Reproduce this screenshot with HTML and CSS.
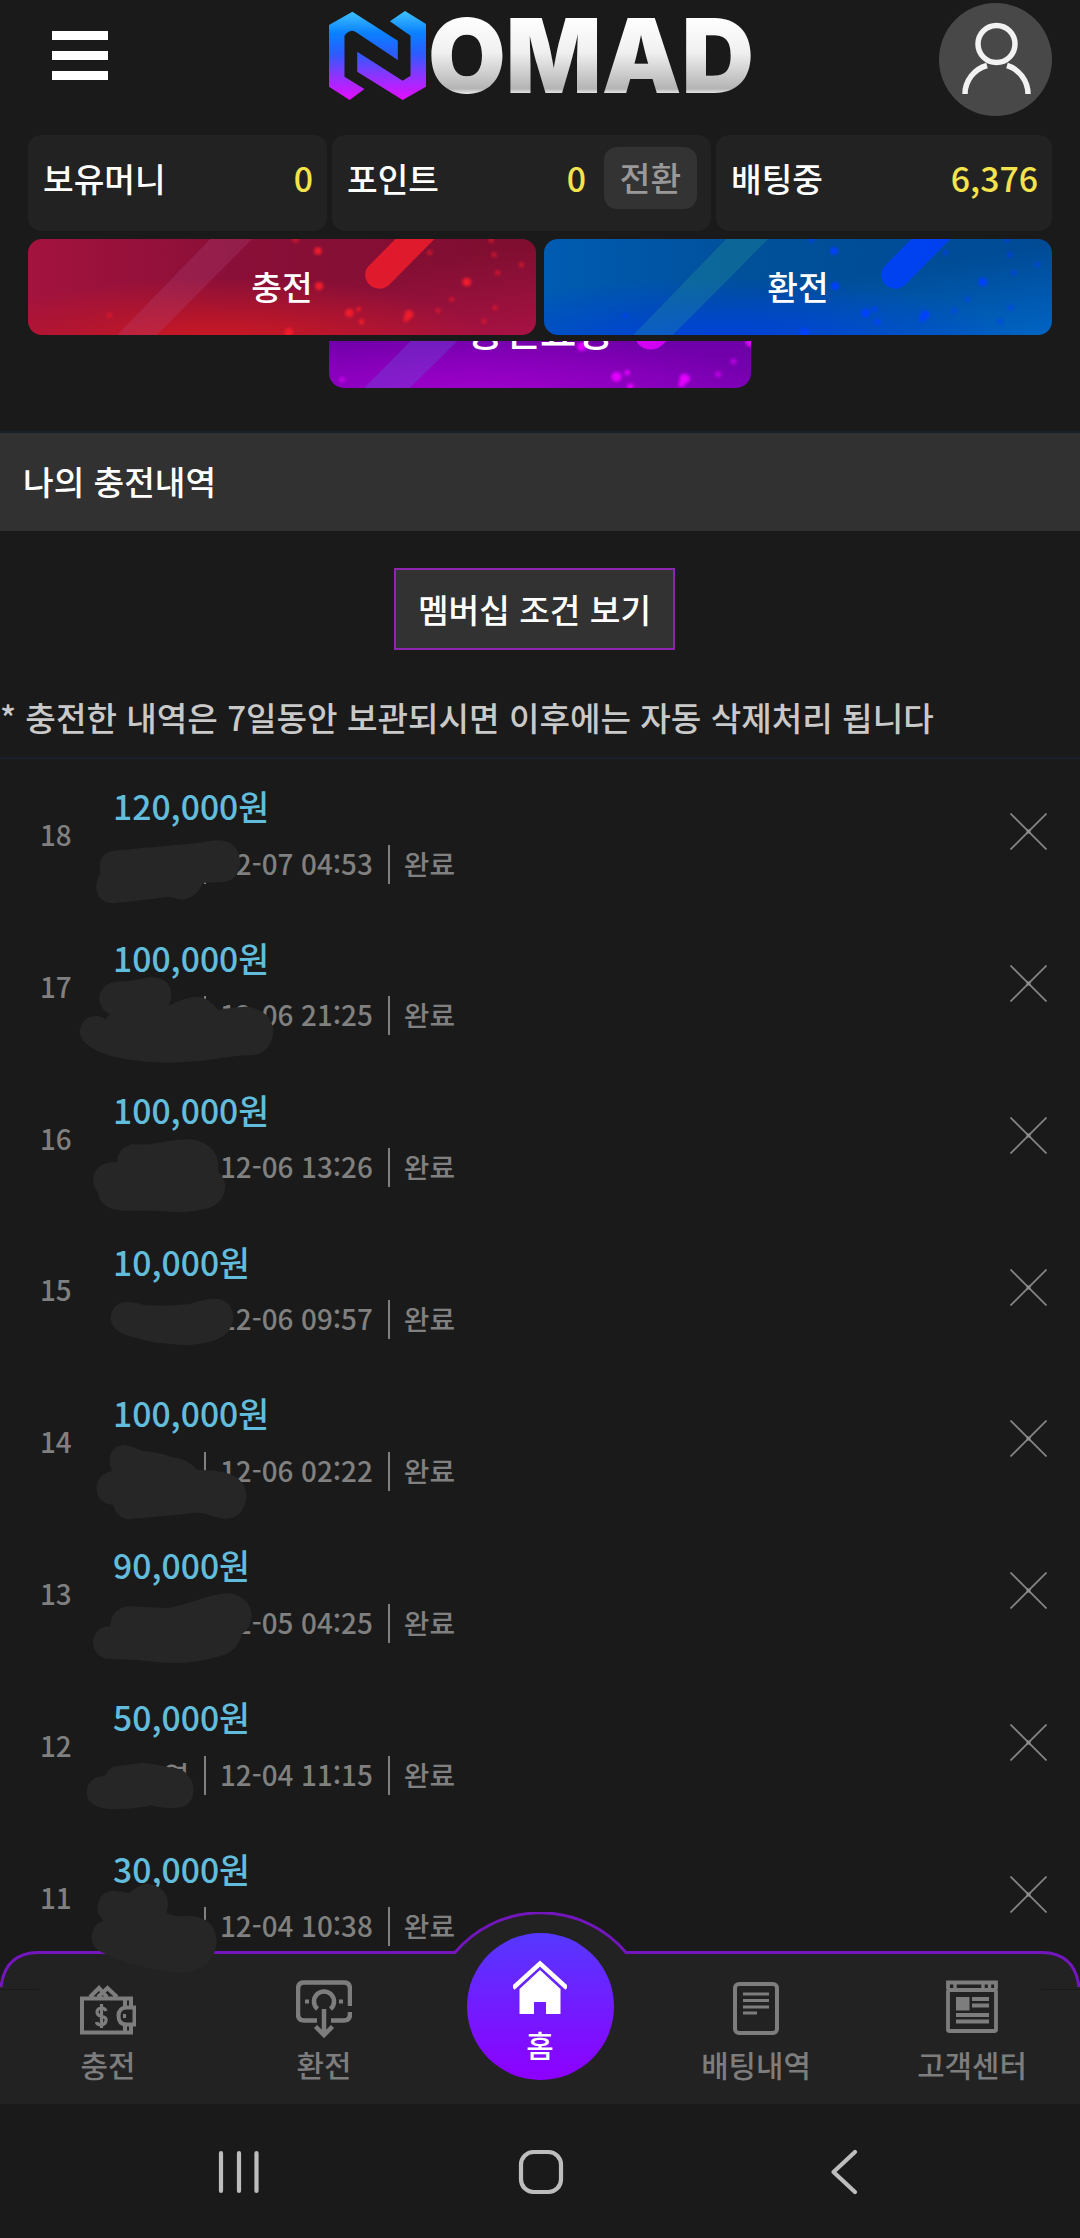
FILE: index.html
```html
<!DOCTYPE html>
<html lang="ko">
<head>
<meta charset="utf-8">
<meta name="viewport" content="width=device-width">
<title>NOMAD</title>
<link rel="stylesheet" href="styles.css">
</head>
<body>
<svg class="defs" width="0" height="0" aria-hidden="true">
  <defs>
    <linearGradient id="mark" gradientUnits="userSpaceOnUse" x1="0" y1="31" x2="0" y2="298"><stop offset="0" stop-color="#3fc4ff"/><stop offset=".25" stop-color="#0a80ff"/><stop offset=".48" stop-color="#2b5cff"/><stop offset=".72" stop-color="#8a35ff"/><stop offset="1" stop-color="#e60cff"/></linearGradient>
    <linearGradient id="silver" gradientUnits="userSpaceOnUse" x1="0" y1="7" x2="0" y2="83"><stop offset="0" stop-color="#fff"/><stop offset=".45" stop-color="#f0f0f0"/><stop offset=".93" stop-color="#b4b4b4"/><stop offset="1" stop-color="#eee"/></linearGradient>
    <g id="sparks">
      <path d="M610 57H732L455 345H340Z" class="streak"/>
      <path d="M1101 165 1240 20" fill="none" stroke="currentColor" stroke-width="82" stroke-linecap="round" opacity=".85"/>
      <g class="dots" fill="currentColor">
        <circle cx="923" cy="93" r="11"/><circle cx="926" cy="198" r="12"/><circle cx="1014" cy="279" r="13"/><circle cx="1041" cy="268" r="7"/><circle cx="1049" cy="305" r="8"/><circle cx="1187" cy="284" r="13"/><circle cx="1179" cy="298" r="8"/><circle cx="1355" cy="186" r="13"/><circle cx="838" cy="337" r="13"/>
        <g opacity=".6"><circle cx="858" cy="58" r="10"/><circle cx="1247" cy="98" r="8"/><circle cx="1434" cy="104" r="8"/><circle cx="1514" cy="134" r="8"/><circle cx="1445" cy="158" r="8"/><circle cx="1311" cy="238" r="8"/><circle cx="1272" cy="272" r="8"/><circle cx="1437" cy="263" r="8"/><circle cx="1405" cy="304" r="8"/><circle cx="318" cy="286" r="8"/><circle cx="1426" cy="60" r="8"/></g>
      </g>
    </g>
    <symbol id="x" viewBox="0 0 37 37"><path d="M.5.5 36.5 36.5M36.5.5.5 36.5" stroke="#858585" stroke-width="1.7"/><rect x="16.5" y="16.5" width="4" height="4" fill="#8d8d8d"/></symbol>
  </defs>
</svg>
<div class="app">
  <header class="header">
    <div class="topbar">
      <div class="menu"><i></i><i></i><i></i></div>
      <div class="logo">
        <svg width="97" height="89" viewBox="955 31 282 267" preserveAspectRatio="none" fill="url(#mark)">
          <path d="M955 73 1023 33 1155 120V178L1036 96Q1020 84 1006 98L1000 105V228L1058 265 1015 298 955 258Z"/>
          <path d="M1132 62 1176 31 1237 70V258L1169 298 1037 213V153L1169 240 1192 225V105Z"/>
        </svg>
        <svg class="word" width="326" height="96" viewBox="0 0 326 96"><text x="-1" y="82" textLength="326" lengthAdjust="spacingAndGlyphs">OMAD</text></svg>
      </div>
      <div class="avatar">
        <svg width="113" height="113" viewBox="0 0 113 113" fill="none" stroke="#f2f2f2" stroke-width="5.500"><circle cx="57.500" cy="41" r="18.500"/><path d="M26 91C26 78 35 66 48 62.500M89 91C89 78 80 66 68 62.500"/></svg>
      </div>
    </div>
    <div class="balances">
      <div class="card c1"><span>보유머니</span><b>0</b></div>
      <div class="card c2"><span>포인트</span><b>0</b><em>전환</em></div>
      <div class="card c3"><span>배팅중</span><b>6,376</b></div>
    </div>
    <div class="actions">
      <div class="btn red"><svg viewBox="81 57 1475 288" preserveAspectRatio="none"><use href="#sparks"/></svg><span>충전</span></div>
      <div class="btn blue"><svg viewBox="81 57 1475 288" preserveAspectRatio="none"><use href="#sparks"/></svg><span>환전</span></div>
    </div>
  </header>
  <main class="content">
    <div class="request"><div class="btn purple"><svg viewBox="955 155 1226 348" preserveAspectRatio="none"><use href="#sparks" transform="translate(629 157) scale(1.145 1.12)"/></svg><span>충전요청</span></div></div>
    <h2 class="title">나의 충전내역</h2>
    <div class="member"><div class="member-btn">멤버십 조건 보기</div></div>
    <p class="note">* 충전한 내역은 7일동안 보관되시면 이후에는 자동 삭제처리 됩니다</p>
    <div class="list">
      <div class="row"><span class="no">18</span><div class="info"><div class="amount">120,000원</div><div class="meta"><span class="name"></span><span>12-07 04:53</span><span>완료</span></div></div><svg class="del"><use href="#x"/></svg></div>
      <div class="row"><span class="no">17</span><div class="info"><div class="amount">100,000원</div><div class="meta"><span class="name"></span><span>12-06 21:25</span><span>완료</span></div></div><svg class="del"><use href="#x"/></svg></div>
      <div class="row"><span class="no">16</span><div class="info"><div class="amount">100,000원</div><div class="meta"><span class="name"></span><span>12-06 13:26</span><span>완료</span></div></div><svg class="del"><use href="#x"/></svg></div>
      <div class="row"><span class="no">15</span><div class="info"><div class="amount">10,000원</div><div class="meta"><span class="name"></span><span>12-06 09:57</span><span>완료</span></div></div><svg class="del"><use href="#x"/></svg></div>
      <div class="row"><span class="no">14</span><div class="info"><div class="amount">100,000원</div><div class="meta"><span class="name"></span><span>12-06 02:22</span><span>완료</span></div></div><svg class="del"><use href="#x"/></svg></div>
      <div class="row"><span class="no">13</span><div class="info"><div class="amount">90,000원</div><div class="meta"><span class="name"></span><span>12-05 04:25</span><span>완료</span></div></div><svg class="del"><use href="#x"/></svg></div>
      <div class="row"><span class="no">12</span><div class="info"><div class="amount">50,000원</div><div class="meta"><span class="name">영</span><span>12-04 11:15</span><span>완료</span></div></div><svg class="del"><use href="#x"/></svg></div>
      <div class="row"><span class="no">11</span><div class="info"><div class="amount">30,000원</div><div class="meta"><span class="name"></span><span>12-04 10:38</span><span>완료</span></div></div><svg class="del"><use href="#x"/></svg></div>
    </div>
  </main>
  <nav class="tabs">
    <svg class="tabs-bg" width="1080" height="192" viewBox="0 0 1080 192">
      <path d="M0 192V75Q4 41 38 40.500H455A112 112 0 0 1 626 40.500H1042Q1076 41 1080 75V192Z" fill="#222"/>
      <path d="M1 75Q5 41 38 40.500H455A112 112 0 0 1 626 40.500H1042Q1075 41 1079 75" fill="none" stroke="#7416bd" stroke-width="3"/>
      <path d="M0 77.500H39M1041 77.500H1080" stroke="#191919"/>
    </svg>
    <div class="tab">
      <svg width="56" height="58" viewBox="0 0 56 58" fill="none" stroke="#7d7d7d" stroke-width="4"><path d="M10 17 19 8 27 17M18 17 27.500 8 37 17M51 27V18.500H2V52.500H51V45M45 19V27M45 45V52"/><path d="M56 27.500H46Q38.500 28 38.500 36T46 44.500H56"/><path d="M54.500 27V45M43 36H46"/><path d="M26 31Q25 28 21.500 28 17 28.500 17 32T22 36.500 26 41 21.500 45Q17 45 16.500 42M21.500 24V48" stroke-width="3.200"/></svg>
      <span>충전</span>
    </div>
    <div class="tab">
      <svg width="56" height="58" viewBox="0 0 56 58" fill="none" stroke="#7d7d7d" stroke-width="4.500"><path d="M54 26V9Q54 2.500 48 2.500H8Q2 2.500 2 9V34Q2 40.500 8 40.500H21M35 40.500H48Q54 40.500 54 34V32"/><path d="M21.500 29Q18 26 18 21.500A10 10 0 0 1 38 21.500Q38 26 34.500 29M28 29V56M19.500 46.500 28 55 36.500 46.500"/><path d="M9 21.500H13M43 21.500H47" stroke-width="4"/></svg>
      <span>환전</span>
    </div>
    <div class="tab home"><div class="orb">
      <svg width="54" height="56" viewBox="0 0 54 56"><path d="M0 28 27 3.500 54 28" fill="none" stroke="#fff" stroke-width="4.500"/><path d="M27 10 47.500 29V54H33V42H21V54H6.500V29Z" fill="#fff"/></svg>
      <span>홈</span></div>
    </div>
    <div class="tab">
      <svg width="46" height="58" viewBox="0 0 46 58" fill="none" stroke="#7d7d7d" stroke-width="4"><rect x="2" y="4" width="42" height="49" rx="4"/><path d="M10 14H36M10 20.500H36M10 27H36M10 33H24" stroke-width="3.200"/></svg>
      <span>배팅내역</span>
    </div>
    <div class="tab">
      <svg width="52" height="58" viewBox="0 0 52 58" fill="none" stroke="#7d7d7d" stroke-width="3.800"><path d="M2 9V2.500H50V9"/><rect x="2" y="10" width="48" height="41" rx="1.500"/><path d="M9 3V9M37 3V9M43.500 3V9" stroke-width="3.400"/><path d="M10 17H23.500V30.500H10Z" fill="#7d7d7d" stroke="none"/><path d="M26 19H43M26 25.500H43M10 35H43M10 41.500H43" stroke-width="3.800"/></svg>
      <span>고객센터</span>
    </div>
  </nav>
  <footer class="system">
    <svg width="1080" height="135" viewBox="0 2103 1080 135" fill="none" stroke="#bdbdbd" stroke-width="4.200" stroke-linecap="round" stroke-linejoin="round"><path d="M221 2153V2191M239 2153V2191M256.500 2153V2191"/><rect x="521" y="2152" width="40" height="40" rx="12.500"/><path d="M855 2152 833.500 2172 855 2192"/></svg>
  </footer>
  <!-- strokes that hide the depositor names -->
  <svg class="mask" width="1080" height="2238" viewBox="0 0 1080 2238" fill="#262626">
    <g transform="translate(0 540) scale(.34435 .33333)">
      <path d="M330 932C400 925 480 918 580 908Q640 893 668 908 700 930 697 975 690 1025 640 1027L590 1028Q570 1075 525 1079 500 1073 490 1070 400 1082 325 1090 282 1085 279 1040 280 1015 292 1002 280 940 330 932Z"/>
    </g>
    <g transform="translate(0 920) scale(.34435 .33333)">
      <path d="M288 236Q292 192 335 185 385 185 430 172 495 168 498 225 498 240 490 258 530 232 575 230 605 232 635 270 670 262 715 260 785 268 794 330 790 400 730 406 700 405 640 415 560 428 480 428 360 425 300 400 235 375 231 335 240 285 285 288 300 292 306 298L320 282Q290 270 288 236Z"/>
      <path d="M385 672Q420 677 460 668 520 657 550 658 620 665 633 725V755Q655 775 654 805 645 860 590 868 550 880 500 875 420 870 365 872 290 870 285 818 265 795 272 765 285 725 340 726 340 685 385 672Z"/>
      <path d="M365 1145Q395 1146 420 1155 480 1160 550 1152 600 1135 630 1136 675 1142 678 1195 672 1245 620 1262 550 1282 500 1272 440 1270 400 1255 325 1240 321 1195 325 1150 365 1145Z"/>
    </g>
    <g transform="translate(0 1380) scale(.34435 .33333)">
      <path d="M318 240Q320 198 362 194 390 200 415 213 460 215 500 232 545 235 572 270 715 265 716 350 708 415 655 416 620 412 600 402 575 395 540 402L370 418Q340 412 328 375 282 370 280 325 283 282 325 273 318 255 318 240Z"/>
      <path d="M375 678Q430 682 490 684 530 675 580 658 630 640 665 640 728 650 731 710 728 745 703 762 690 815 640 828 580 848 510 850 450 847 400 840L310 836Q272 828 270 785 275 740 320 738 322 685 375 678Z"/>
      <path d="M335 1158Q370 1155 410 1148 450 1150 490 1162 535 1165 543 1185 563 1200 562 1235 558 1280 510 1284 465 1285 440 1276 390 1288 330 1288 255 1285 251 1238 255 1190 305 1187 315 1165 335 1158Z"/>
    </g>
    <g transform="translate(0 1820) scale(.34435 .33333)">
      <path d="M283 265Q285 215 330 212 355 214 375 220 405 190 430 191 487 200 488 255L484 278Q500 288 525 289 630 280 629 370 620 458 510 459 440 450 400 436 350 425 300 398 268 390 265 352 270 310 300 303 283 285 283 265Z"/>
    </g>
  </svg>
</div>
</body>
</html>
```
FILE: styles.css
```css
* { box-sizing: border-box; margin: 0; padding: 0; }
body { background: #1a1a1a; color: #fff; font-family: "Noto Sans CJK KR", "Noto Sans", sans-serif; font-size: 33.3px; font-weight: 500; line-height: 48px; }
b, em, h2 { font-weight: 500; font-style: normal; font-size: inherit; }
svg { display: block; }
.defs { position: absolute; }
.app { position: relative; width: 1080px; height: 2238px; overflow: hidden; display: flex; flex-direction: column; }

.header { height: 341px; flex: none; padding: 3px 28px 0; }
.topbar { display: flex; justify-content: space-between; align-items: flex-start; height: 132px; }
.menu { width: 80px; padding: 28px 0 0 24px; display: grid; gap: 11px; }
.menu i { height: 9px; width: 56px; background: #fff; }
.logo { display: flex; padding: 8px 0 0 37px; gap: 3px; }
.word { overflow: visible; }
.word text { font-family: Inter, sans-serif; font-weight: 900; font-size: 103px; fill: url(#silver); }
.avatar { width: 113px; height: 113px; border-radius: 50%; background: #484848; }
.balances { display: flex; gap: 5px; height: 96px; }
.card { display: flex; align-items: center; background: #222; border-radius: 13px; padding: 0 14px 11px 15px; white-space: nowrap; }
.card b { margin-left: auto; color: #f4e34c; font-size: 33.8px; }
.c1 { width: 299px; }
.c2 { width: 379px; }
.c3 { width: 336px; }
.c2 em { width: 93px; height: 62px; margin-left: 18px; border-radius: 13px; background: #333; color: #999; text-align: center; line-height: 60px; }
.actions { display: flex; gap: 8px; margin-top: 8px; }
.btn { position: relative; overflow: hidden; display: flex; align-items: center; justify-content: center; border-radius: 14px; }
.btn svg { position: absolute; inset: 0; width: 100%; height: 100%; }
.btn span { position: relative; color: #fff; }
.actions .btn { width: 508px; height: 96px; padding-bottom: 2px; }
.streak { fill: var(--streak); }
.dots { filter: blur(4px); }
.red { --streak: rgba(190, 90, 150, .2); color: #f01c2c; background: radial-gradient(ellipse 55% 75% at 38% 115%, #d21a1e, rgba(200, 24, 36, 0)), linear-gradient(170deg, rgba(130, 14, 50, 0) 50%, #a81244), linear-gradient(90deg, #a3133e, #8a0f38 40%, #7e0e30); }
.blue { --streak: rgba(60, 190, 140, .2); color: #0040ff; background: radial-gradient(ellipse 60% 75% at 35% 115%, #003ce0, rgba(0, 60, 220, 0)), linear-gradient(170deg, rgba(0, 80, 150, 0) 50%, #0064c4), linear-gradient(90deg, #005cb2, #00509a 40%, #004a94); }
.blue .dots { opacity: .9; }
.purple { --streak: rgba(110, 80, 220, .35); color: #e400ff; background: radial-gradient(ellipse 70% 60% at 35% 110%, #a200cc, rgba(150, 0, 200, 0)), linear-gradient(#5c0094, #7a00b4); }

.content { height: 1612px; flex: none; }
.request { height: 90px; overflow: hidden; display: flex; flex-direction: column; justify-content: flex-end; align-items: center; padding-bottom: 43px; }
.purple { width: 422px; height: 116px; flex: none; border-radius: 15px; font-size: 39.5px; padding-bottom: 2px; }
.title { height: 100px; padding-left: 23px; background: #313131; border-top: 2px solid #17202b; line-height: 95px; }
.member { padding: 37px 0 0 394px; height: 144px; }
.member-btn { width: 281px; height: 82px; border: 2px solid #8f24b3; background: #323232; text-align: center; line-height: 78px; }
.note { height: 84px; color: #c9c9c9; font-size: 33.2px; line-height: 84px; border-bottom: 2px solid #17202b; white-space: nowrap; }
.list { display: grid; grid-auto-rows: 151.85px; }
.row { display: grid; grid-template-columns: 113px 1fr 37px; padding-right: 33px; }
.no { font-size: 27.8px; color: #808080; align-self: center; padding-left: 40px; line-height: 40px; padding-bottom: 2px; }
.info { padding-top: 23px; }
.amount { color: #62bcdc; height: 50px; font-size: 33.7px; }
.meta { display: flex; align-items: center; height: 64px; color: #808080; font-size: 27.8px; }
.meta span { padding: 0 15px 0 14px; height: 39px; line-height: 36px; white-space: nowrap; }
.meta span + span { border-left: 2px solid #808080; }
.meta .name { width: 91px; padding-left: 0; text-align: right; }
.del { width: 37px; height: 37px; margin-top: 54px; }

.tabs { position: relative; height: 150px; flex: none; display: grid; grid-template-columns: repeat(5, 216px); color: #7d7d7d; font-size: 29.8px; }
.tabs-bg { position: absolute; left: 0; top: -41.5px; }
.tab { position: relative; display: flex; flex-direction: column; align-items: center; padding-top: 27px; line-height: 44px; }
.tab > span { margin-top: 4px; }
.home { padding: 0; color: #fff; }
.orb { width: 147px; height: 147px; margin-top: -20px; border-radius: 50%; background: linear-gradient(#5638ff, #8d00ff); display: flex; flex-direction: column; align-items: center; padding-top: 27px; }
.orb span { margin-top: 6px; }
.system { height: 135px; flex: none; }
.mask { position: absolute; left: 0; top: 0; }
```
